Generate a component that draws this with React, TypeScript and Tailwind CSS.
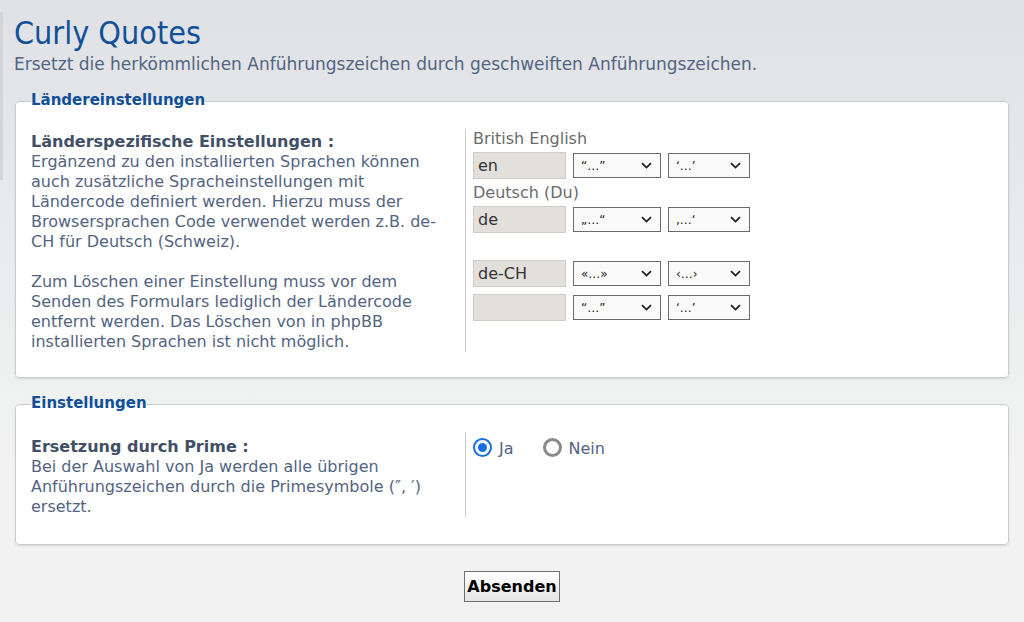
import React from "react";

type LangRow = { label?: string; code: string; double: string; single: string };

const rows: LangRow[] = [
  { label: "British English", code: "en", double: "“…”", single: "‘…’" },
  { label: "Deutsch (Du)", code: "de", double: "„…“", single: "‚…‘" },
  { label: "", code: "de-CH", double: "«…»", single: "‹…›" },
  { code: "", double: "“…”", single: "‘…’" },
];

function Chevron() {
  return (
    <svg width="11" height="7" viewBox="0 0 11 7" className="shrink-0">
      <path d="M1 1.2 L5.5 5.6 L10 1.2" fill="none" stroke="#222" strokeWidth="1.8" />
    </svg>
  );
}

function FakeSelect({ value, width }: { value: string; width: string }) {
  return (
    <div
      className={`${width} h-[25px] border border-[#6b6b6b] bg-[#fafafa] flex items-center justify-between pl-[7px] pr-[8px] text-[12px] text-[#222]`}
    >
      <span>{value}</span>
      <Chevron />
    </div>
  );
}

function Radio({ checked, label }: { checked?: boolean; label: string }) {
  return (
    <label className="flex items-center gap-[7px]">
      {checked ? (
        <span className="w-[19px] h-[19px] rounded-full border-[2px] border-[#1a6fe0] flex items-center justify-center">
          <span className="w-[9px] h-[9px] rounded-full bg-[#1a6fe0]" />
        </span>
      ) : (
        <span className="w-[19px] h-[19px] rounded-full border-[3px] border-[#8a8a8e]" />
      )}
      <span className="text-[#536482] pt-[3px]">{label}</span>
    </label>
  );
}

export default function App() {
  return (
    <div
      className="relative min-h-[622px] w-full bg-[linear-gradient(to_bottom,#dfe1e5_0px,#eef0f0_360px,#f2f2f2_460px)] text-[16px] leading-[20px]"
      style={{ fontFamily: '"DejaVu Sans", Verdana, sans-serif' }}
    >
      <div className="absolute left-0 top-[12px] w-[3px] h-[168px] bg-[#d3d5d9]" />

      <div className="px-[14px] pt-[13px]">
        <h1
          className="text-[32px] leading-[40px] text-[#115098]"
          style={{ fontFamily: '"DejaVu Sans Condensed", "DejaVu Sans", sans-serif' }}
        >
          Curly Quotes
        </h1>
        <p className="mt-[1px] text-[17px] text-[#536482]">
          Ersetzt die herkömmlichen Anführungszeichen durch geschweiften Anführungszeichen.
        </p>
      </div>

      <fieldset className="mx-[15px] mt-[16px] bg-white border border-[#cccccc] rounded-[4px] shadow-[0_1px_2px_rgba(0,0,0,0.12)] px-[15px] pt-[16px] pb-[25px]">
        <legend className="px-0 pb-[3px] text-[15px] font-bold text-[#115098]">Ländereinstellungen</legend>
        <div className="flex">
          <div className="w-[434px] shrink-0 pt-[3px] pr-[20px]">
            <p className="font-bold text-[#425067]">Länderspezifische Einstellungen :</p>
            <p className="text-[#536482]">
              Ergänzend zu den installierten Sprachen können auch zusätzliche Spracheinstellungen mit
              Ländercode definiert werden. Hierzu muss der Browsersprachen Code verwendet werden z.B. de-CH
              für Deutsch (Schweiz).
            </p>
            <p className="text-[#536482] mt-[20px]">
              Zum Löschen einer Einstellung muss vor dem Senden des Formulars lediglich der Ländercode
              entfernt werden. Das Löschen von in phpBB installierten Sprachen ist nicht möglich.
            </p>
          </div>
          <div className="flex-1 border-l border-[#cccccc] pl-[7px]">
            {rows.map((r, i) => (
              <div key={i} className={r.label === undefined ? "mt-[7px]" : i === 0 ? "" : "mt-[4px]"}>
                {r.label !== undefined && (
                  <div className="h-[20px] text-[#6b6b6b] mb-[3px]">{r.label}</div>
                )}
                <div className="flex items-center gap-[7px]">
                  <div className="w-[93px] h-[27px] bg-[#e3e0db] border border-[#d0ccc6] flex items-center px-[4px] text-[#333]">
                    {r.code}
                  </div>
                  <FakeSelect value={r.double} width="w-[88px]" />
                  <FakeSelect value={r.single} width="w-[82px]" />
                </div>
              </div>
            ))}
          </div>
        </div>
      </fieldset>

      <fieldset className="mx-[15px] mt-[15px] bg-white border border-[#cccccc] rounded-[4px] shadow-[0_1px_2px_rgba(0,0,0,0.12)] px-[15px] pt-[16px] pb-[27px]">
        <legend className="px-0 pb-[3px] text-[15px] font-bold text-[#115098]">Einstellungen</legend>
        <div className="flex">
          <div className="w-[434px] shrink-0 pt-[5px] pr-[20px]">
            <p className="font-bold text-[#425067]">Ersetzung durch Prime :</p>
            <p className="text-[#536482]">
              Bei der Auswahl von Ja werden alle übrigen Anführungszeichen durch die Primesymbole (″, ′)
              ersetzt.
            </p>
          </div>
          <div className="flex-1 border-l border-[#cccccc] pl-[7px] pt-[4px]">
            <div className="flex items-center gap-[29px]">
              <Radio checked label="Ja" />
              <Radio label="Nein" />
            </div>
          </div>
        </div>
      </fieldset>

      <div className="flex justify-center mt-[26px] pb-[20px]">
        <button className="h-[31px] px-[2px] border border-[#6f6f6f] bg-[linear-gradient(to_bottom,#ffffff,#e4e4e4)] font-bold text-black text-[16px]">
          Absenden
        </button>
      </div>
    </div>
  );
}
